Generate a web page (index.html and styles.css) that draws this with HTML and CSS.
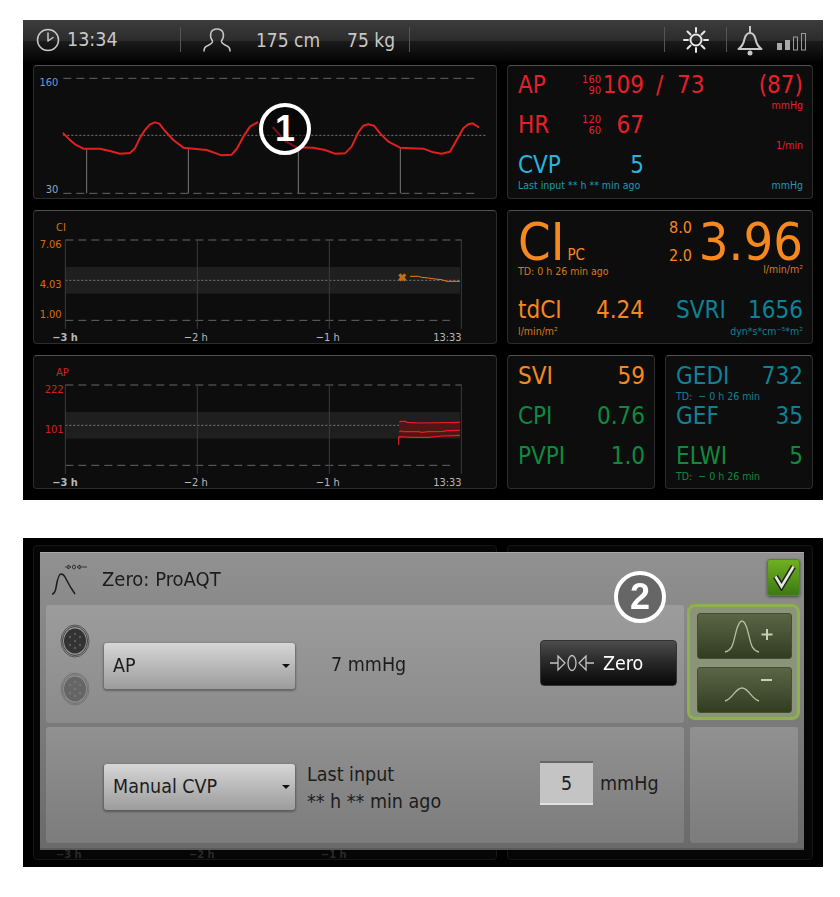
FILE: index.html
```html
<!DOCTYPE html>
<html lang="en">
<head>
<meta charset="utf-8">
<title>ProAQT monitor</title>
<link rel="stylesheet" href="styles.css">
</head>
<body>
<main class="page">

<section class="screen monitor">
  <header class="topbar">
    <div class="cell cell-time">
      <svg class="icon" width="24" height="24" viewBox="0 0 24 24"><circle cx="12" cy="12" r="10.5"/><path d="M12 13V5M12 13l5-3.5"/></svg>
      <span>13:34</span>
    </div>
    <div class="cell cell-patient">
      <svg class="icon" width="28" height="24" viewBox="0 0 28 24"><path d="M1 23c0-3 1-4.500 4-5.500 3-1.500 5-2.500 4.500-4.500C6 8 7 1 14 1s8 7 4.500 12c-.5 2 1.500 3 4.500 4.500 3 1 4 2.500 4 5.500"/></svg>
      <span class="height">175 cm</span>
      <span class="weight">75 kg</span>
    </div>
    <div class="spacer"></div>
    <div class="cell cell-sun">
      <svg class="icon icon-sun" width="26" height="26" viewBox="0 0 26 26"><circle cx="13" cy="13" r="5.500"/><path d="M13 1v4M13 21v4M1 13h4M21 13h4M4.500 4.500l3 3M18.500 18.500l3 3M4.500 21.500l3-3M18.500 7.500l3-3"/></svg>
    </div>
    <div class="cell cell-alarm">
      <svg class="icon icon-bell" width="26" height="30" viewBox="0 0 26 30"><path d="M13 0v7M1.500 23c3-2 5-5 6-10 1-4 3-6 5.500-6s4.500 2 5.500 6c1 5 3 8 6 10z"/><circle class="solid" cx="13" cy="27" r="2.500"/></svg>
      <svg class="bars" width="30" height="18" viewBox="0 0 30 18"><rect class="on" x="0" y="10" width="5" height="7"/><rect class="on" x="8" y="7" width="5" height="10"/><rect x="16.500" y="4" width="4" height="13"/><rect x="24.500" y=".5" width="4" height="16.500"/></svg>
    </div>
  </header>

  <div class="dash">
    <article class="panel">
      <svg class="chart" viewBox="42 153 1386 396">
        <path class="dash-line" d="M130 190H1375M130 535H1375"/>
        <path class="dot-line" d="M130 361H1400"/>
        <path class="tick" d="M200 403V535M505 400V535M835 398V535M1141 398V535"/>
        <polyline class="wave" points="130,355 150,375 165,388 190,401 240,401 270,408 300,416 330,414 345,400 360,368 375,345 390,328 405,322 418,326 435,348 460,375 490,398 560,405 605,421 635,419 650,402 670,365 690,335 712,322"/>
        <polyline class="wave" points="760,338 795,378 830,397 880,398 915,405 945,416 975,415 995,395 1015,352 1030,332 1045,328 1062,332 1080,355 1105,380 1140,398 1210,401 1240,412 1265,416 1290,410 1310,375 1330,340 1345,328 1358,325 1375,336"/>
        <text class="axis blue" x="115" y="212" text-anchor="end">160</text>
        <text class="axis blue-dim" x="115" y="533" text-anchor="end">30</text>
      </svg>
    </article>

    <article class="panel vitals">
      <div class="vrow">
        <span class="lbl red">AP</span>
        <span class="lim red">160<br>90</span>
        <span class="val red">109</span>
        <span class="extra red">/&nbsp;&nbsp;73</span>
        <span class="end red">(87)</span>
        <span class="sub"></span>
        <span class="unit red">mmHg</span>
      </div>
      <div class="vrow">
        <span class="lbl red">HR</span>
        <span class="lim red">120<br>60</span>
        <span class="val red">67</span>
        <span class="extra"></span>
        <span class="end"></span>
        <span class="sub"></span>
        <span class="unit red">1/min</span>
      </div>
      <div class="vrow">
        <span class="lbl blue-v">CVP</span>
        <span class="lim"></span>
        <span class="val blue-v">5</span>
        <span class="extra"></span>
        <span class="end"></span>
        <span class="sub blue-s">Last input ** h ** min ago</span>
        <span class="unit blue-s">mmHg</span>
      </div>
    </article>

    <article class="panel">
      <svg class="chart" viewBox="42 18 1386 396">
        <rect class="band" x="136" y="186" width="1184" height="80"/>
        <path class="dash-line" d="M136 105H1325M136 346H1290"/>
        <path class="dot-line" d="M136 226H1320"/>
        <path class="grid-line" d="M136 105V372M532 105V372M928 105V372M1324 105V372"/>
        <path class="marker" d="M1138 208l18 18M1156 208l-18 18"/>
        <polyline class="trend" points="1170,214 1195,214 1205,217 1225,219 1245,222 1265,224 1280,229 1320,229"/>
        <text class="axis orange" x="108" y="77">CI</text>
        <text class="axis orange" x="125" y="128" text-anchor="end">7.06</text>
        <text class="axis orange" x="125" y="248" text-anchor="end">4.03</text>
        <text class="axis orange" x="125" y="338" text-anchor="end">1.00</text>
        <text class="axis time strong" x="135" y="407" text-anchor="middle">−3 h</text>
        <text class="axis time" x="527" y="407" text-anchor="middle">−2 h</text>
        <text class="axis time" x="923" y="407" text-anchor="middle">−1 h</text>
        <text class="axis time" x="1325" y="407" text-anchor="end">13:33</text>
      </svg>
    </article>

    <article class="panel ci">
      <div class="ci-main">
        <div class="ci-name">
          <div class="ci-title"><span class="ci-big">CI</span><span class="ci-pc">PC</span></div>
          <div class="small ci-note">TD: 0 h 26 min ago</div>
        </div>
        <div class="ci-limits"><span>8.0</span><span>2.0</span></div>
        <div class="ci-value">
          <div class="ci-big">3.96</div>
          <div class="small ci-unit">l/min/m²</div>
        </div>
      </div>
      <div class="ci-lower">
        <div class="mini">
          <span class="lbl">tdCI</span><span class="num">4.24</span>
          <span class="small">l/min/m²</span>
        </div>
        <div class="mini teal">
          <span class="lbl">SVRI</span><span class="num">1656</span>
          <span class="small mini-right">dyn*s*cm⁻⁵*m²</span>
        </div>
      </div>
    </article>

    <article class="panel stack-panel">
      <svg class="chart" viewBox="42 18 1386 396">
        <rect class="band" x="136" y="186" width="1184" height="80"/>
        <path class="dash-line" d="M136 105H1325M136 346H1290"/>
        <path class="dot-line" d="M136 226H1320"/>
        <path class="grid-line" d="M136 105V372M532 105V372M928 105V372M1324 105V372"/>
        <rect class="range" x="1138" y="216" width="182" height="46"/>
        <polyline class="ap-line" points="1136,285 1136,262 1138,260 1175,262 1225,262 1265,258 1320,256"/>
        <polyline class="ap-line" points="1138,217 1142,214 1158,214 1160,217 1200,219 1320,217"/>
        <polyline class="ap-line" points="1138,246 1142,243 1150,245 1195,245 1205,247 1225,245 1270,244 1280,242 1320,241"/>
        <text class="axis red-a" x="108" y="77">AP</text>
        <text class="axis red-a" x="131" y="128" text-anchor="end">222</text>
        <text class="axis red-a" x="131" y="248" text-anchor="end">101</text>
        <text class="axis time strong" x="135" y="407" text-anchor="middle">−3 h</text>
        <text class="axis time" x="527" y="407" text-anchor="middle">−2 h</text>
        <text class="axis time" x="923" y="407" text-anchor="middle">−1 h</text>
        <text class="axis time" x="1325" y="407" text-anchor="end">13:33</text>
      </svg>
    </article>

    <div class="pair">
      <article class="panel tiles">
        <div class="tile orange-t"><span class="lbl">SVI</span><span class="num">59</span></div>
        <div class="tile green-t"><span class="lbl">CPI</span><span class="num">0.76</span></div>
        <div class="tile green-t"><span class="lbl">PVPI</span><span class="num">1.0</span></div>
      </article>
      <article class="panel tiles">
        <div class="tile teal"><span class="lbl">GEDI</span><span class="num">732</span><span class="small">TD:&nbsp;&nbsp;− 0 h 26 min</span></div>
        <div class="tile teal"><span class="lbl">GEF</span><span class="num">35</span></div>
        <div class="tile green-t"><span class="lbl">ELWI</span><span class="num">5</span><span class="small">TD:&nbsp;&nbsp;− 0 h 26 min</span></div>
      </article>
    </div>
  </div>

  <div class="badge badge-one">1</div>
</section>

<section class="screen zero">
  <div class="ghost ghost-left"><span>−3 h</span><span>−2 h</span><span>−1 h</span></div>
  <div class="ghost ghost-right"></div>

  <div class="dialog">
    <header class="dialog-head">
      <svg class="dlg-icon" width="36" height="32" viewBox="0 0 36 32"><path d="M0 30c2 0 3-1 4-6 1-6 2-14 5-14 2 0 3 1 4 3 2 4 5 10 10 17"/><path class="thin" d="M13 3h3M28 3h7M16 1l3 2-3 2zM28 1l-3 2 3 2z"/><ellipse class="thin" cx="22" cy="3" rx="1.500" ry="2"/></svg>
      <h1>Zero: ProAQT</h1>
      <button class="check" type="button" aria-label="Confirm">
        <svg width="26" height="26" viewBox="0 0 26 26"><path class="check-shadow" d="M4.500 11.500l6 10 12-20"/><path class="check-mark" d="M4.500 11.500l6 10 12-20"/></svg>
      </button>
    </header>
    <div class="dialog-body">
      <div class="row">
        <div class="ports">
          <svg class="port" width="30" height="34" viewBox="0 0 30 34"><ellipse class="ring" cx="15" cy="17" rx="14" ry="16"/><ellipse class="ring2" cx="15" cy="17" rx="12.500" ry="14.500"/><ellipse class="disc" cx="15" cy="17" rx="11" ry="12.500"/><g class="pins"><circle cx="15" cy="10" r="1.200"/><circle cx="10" cy="13" r="1.200"/><circle cx="20" cy="13" r="1.200"/><circle cx="15" cy="17" r="1.200"/><circle cx="10" cy="21" r="1.200"/><circle cx="20" cy="21" r="1.200"/><circle cx="15" cy="24" r="1.200"/></g></svg>
          <svg class="port port-off" width="30" height="34" viewBox="0 0 30 34"><ellipse class="ring" cx="15" cy="17" rx="14" ry="16"/><ellipse class="ring2" cx="15" cy="17" rx="12.500" ry="14.500"/><ellipse class="disc" cx="15" cy="17" rx="11" ry="12.500"/><g class="pins"><circle cx="15" cy="10" r="1.200"/><circle cx="10" cy="13" r="1.200"/><circle cx="20" cy="13" r="1.200"/><circle cx="15" cy="17" r="1.200"/><circle cx="10" cy="21" r="1.200"/><circle cx="20" cy="21" r="1.200"/><circle cx="15" cy="24" r="1.200"/></g></svg>
        </div>
        <div class="select">AP</div>
        <div class="info info-wide">7 mmHg</div>
        <div class="action">
          <button class="zero-btn" type="button">
            <svg width="44" height="22" viewBox="0 0 44 22"><path d="M0 11h8M36 11h8M8 4l7 7-7 7zM36 4l-7 7 7 7z"/><ellipse cx="22" cy="11" rx="4" ry="7.500"/></svg>
            <span>Zero</span>
          </button>
        </div>
      </div>
      <div class="scale">
        <button class="scale-btn" type="button" aria-label="Scale up">
          <svg width="94" height="45" viewBox="0 0 94 45"><path class="curve" d="M27 38c8-2 8-9 11-20 2-8 4-11 6-11s4 3 6 11c3 11 3 18 11 20"/><path class="sign" d="M69 15v11M63.500 20.500h11"/></svg>
        </button>
        <button class="scale-btn" type="button" aria-label="Scale down">
          <svg width="94" height="45" viewBox="0 0 94 45"><path class="curve" d="M27 33c8-2 10-13 17-13s9 11 17 13"/><path class="sign" d="M63 12h11"/></svg>
        </button>
      </div>
      <div class="row row-low">
        <div class="ports"></div>
        <div class="select">Manual CVP</div>
        <div class="info">Last input<br>** h ** min ago</div>
        <div class="action action-input">
          <div class="input">5</div>
          <span>mmHg</span>
        </div>
      </div>
      <div class="row-empty"></div>
    </div>
  </div>

  <div class="badge badge-two">2</div>
</section>

</main>
</body>
</html>
```

FILE: styles.css
```css
* { box-sizing: border-box; }

html, body { margin: 0; padding: 0; background: #fff; }

body { font-family: "DejaVu Sans Condensed", "DejaVu Sans", sans-serif; font-stretch: condensed; }

.page {
  display: flex;
  flex-direction: column;
  gap: 38px;
  width: 800px;
  margin: 20px 0 0 23px;
}

.screen {
  position: relative;
  width: 800px;
  background: #000;
  overflow: hidden;
}

.monitor { height: 480px; }
.zero { height: 329px; }

/* top bar */
.topbar {
  display: flex;
  align-items: flex-start;
  height: 45px;
  padding-top: 7px;
  color: #c8c8c8;
  font-size: 19.500px;
  background: linear-gradient(#3d3d3d 0, #2b2b2b 21px, #1b1b1b 21px, #0a0a0a 36px, #000 44px);
}

.cell {
  display: flex;
  align-items: center;
  height: 25px;
  border-right: 1px solid #555;
}

.cell-time { width: 158px; padding-left: 13px; gap: 7px; }
.cell-patient { width: 229px; padding-left: 22px; font-size: 19px; }
.height { margin-left: 25px; }
.weight { margin-left: 27px; }
.spacer { width: 254px; }
.cell-sun { width: 63px; padding-left: 18px; border-left: 1px solid #555; }
.cell-alarm { padding-left: 10px; border-right: 0; gap: 14px; }

.icon { flex: none; fill: none; stroke: #c8c8c8; stroke-width: 1.5; stroke-linecap: round; stroke-linejoin: round; }
.icon-sun { stroke: #e8e8e8; stroke-width: 2; }
.icon-bell { stroke-width: 2; }
.icon .solid { fill: #c8c8c8; stroke: none; }
.cell-alarm .icon { margin-top: 2px; }
.bars { flex: none; fill: none; stroke: #9a9a9a; margin-top: 5px; }
.bars .on { fill: #a8a8a8; stroke: none; }

/* dashboard grid */
.dash {
  display: grid;
  grid-template-columns: 464px 306px;
  grid-auto-rows: 134px;
  column-gap: 10px;
  row-gap: 11px;
  padding-left: 10px;
}

.panel {
  background: #0d0d0d;
  border: 1px solid #2c2c2c;
  border-top-color: #505050;
  border-radius: 4px;
  overflow: hidden;
}

.chart { display: block; width: 462px; height: 132px; }

.dash-line { fill: none; stroke: #666; stroke-width: 3; stroke-dasharray: 24 15; }
.dot-line { fill: none; stroke: #7a7a7a; stroke-width: 3; stroke-dasharray: 6 6; }
.tick { fill: none; stroke: #777; stroke-width: 3; }
.grid-line { fill: none; stroke: #3c3c3c; stroke-width: 3; }
.band { fill: #1f1f1f; }
.wave { fill: none; stroke: #e0201f; stroke-width: 6; stroke-linejoin: round; stroke-linecap: round; }
.trend { fill: none; stroke: #f07c12; stroke-width: 3; }
.marker { fill: none; stroke: #cc6a10; stroke-width: 9; }
.range { fill: #4f1616; }
.ap-line { fill: none; stroke: #e81c24; stroke-width: 3.500; }

.axis { font-size: 33px; }
.blue { fill: #6c9bd2; }
.blue-dim { fill: #8da8c0; }
.orange { fill: #d96d0a; }
.red-a { fill: #d81c24; }
.time { fill: #b8b8b8; }
.strong { font-weight: 700; }

/* vital rows */
.vitals { padding: 5px 9px 0 10px; }

.vrow {
  display: grid;
  grid-template-columns: 64px 19px 43px 1fr auto;
  grid-template-rows: 28px 12px;
  align-items: center;
  font-size: 24px;
  line-height: 28px;
}

.vrow .lbl, .vrow .val, .vrow .extra, .vrow .end { white-space: nowrap; }
.val { text-align: right; }
.extra { padding-left: 12px; }
.lim { font-size: 11px; line-height: 11px; text-align: right; white-space: nowrap; }
.sub { grid-column: 1 / 5; font-size: 10.500px; line-height: 12px; white-space: nowrap; }
.unit { grid-column: 5; font-size: 10.500px; line-height: 12px; text-align: right; white-space: nowrap; }

.red { color: #e6202a; }
.blue-v { color: #29b3dc; }
.blue-s { color: #1f97b8; }

/* CI panel */
.ci { padding: 0 9px 0 10px; color: #f5881f; }

.ci-main { display: flex; height: 85px; padding-top: 5px; }
.ci-name { width: 151px; }
.ci-title { display: flex; align-items: baseline; height: 52px; }
.ci-big { font-size: 52px; line-height: 52px; }
.ci-pc { font-size: 15px; margin-left: 3px; }
.small { display: block; font-size: 10.500px; line-height: 13px; white-space: nowrap; }
.ci-note { margin-top: -3px; }
.ci-unit { margin-top: -5px; }
.ci .small { color: #d67a1a; }
.ci-limits { display: flex; flex-direction: column; gap: 8px; padding-top: 2px; font-size: 16px; line-height: 20px; }
.ci-value { flex: 1; text-align: right; }

.ci-lower { display: grid; grid-template-columns: 126px 1fr; column-gap: 32px; }

.mini {
  display: grid;
  grid-template-columns: 1fr auto;
  font-size: 24px;
  line-height: 28px;
  white-space: nowrap;
}
.mini .small { grid-column: 1 / 3; line-height: 14px; }
.mini .mini-right { text-align: right; }
.ci .mini.teal { color: #0f8196; }
.ci .mini.teal .small { color: #0f8196; }

.pair { display: grid; grid-template-columns: 148px 148px; column-gap: 10px; }

.tiles { padding: 0 9px 0 10px; }

.tile {
  display: grid;
  grid-template-columns: 1fr auto;
  grid-template-rows: 28px 12px;
  height: 40px;
  font-size: 24px;
  line-height: 28px;
  white-space: nowrap;
}
.tile:first-child { margin-top: 6px; }
.tile .small { grid-column: 1 / 3; line-height: 12px; }
.orange-t { color: #f5881f; }
.green-t { color: #0d8a3f; }
.teal { color: #0f8196; }

/* annotations */
.badge {
  position: absolute;
  display: flex;
  align-items: center;
  justify-content: center;
  width: 52px;
  height: 52px;
  border: 4px solid #fff;
  border-radius: 50%;
  color: #fff;
  font-family: "Liberation Sans", sans-serif;
  font-stretch: normal;
  font-size: 36px;
  font-weight: 700;
  line-height: 1;
}
.badge-one { left: 236px; top: 83px; background: rgba(0, 0, 0, .45); }
.badge-two { left: 591px; top: 33px; background: #666; }

/* zero dialog */
.ghost {
  position: absolute;
  top: 7px;
  height: 315px;
  background: #060606;
  border: 1px solid #161616;
  border-radius: 4px;
}
.ghost-left { left: 10px; width: 464px; color: #2a2a2a; font-size: 11px; font-weight: 700; }
.ghost-left span { position: absolute; top: 302px; }
.ghost-left span:nth-child(1) { left: 22px; }
.ghost-left span:nth-child(2) { left: 155px; }
.ghost-left span:nth-child(3) { left: 287px; }
.ghost-right { left: 484px; width: 306px; }

.dialog {
  position: absolute;
  left: 17px;
  top: 14px;
  width: 764px;
  height: 298px;
  padding: 0 4px 6px 6px;
  background: linear-gradient(#919191, #6a6a6a);
  border-top: 1px solid #aaa;
  border-bottom: 2px solid #5a5a5a;
  color: #1c1c1c;
  filter: blur(.45px);
}

.dialog-head {
  display: flex;
  align-items: center;
  height: 52px;
  padding-left: 6px;
}

.dlg-icon { flex: none; margin-top: 2px; fill: none; stroke: #1c1c1c; stroke-width: 1.500; }
.dlg-icon .thin { stroke-width: .8; }
.dialog-head h1 { flex: 1; margin: 0 0 0 14px; font-size: 20px; font-weight: 400; }

.check {
  display: flex;
  align-items: center;
  justify-content: center;
  width: 33px;
  height: 37px;
  margin-top: -3px;
  padding: 0;
  border: 1px solid #5b7d38;
  border-radius: 3px;
  background: linear-gradient(#6fb021, #3c7a12);
  box-shadow: 0 1px 3px rgba(0, 0, 0, .5);
}
.check svg { fill: none; }
.check-shadow { stroke: #222; stroke-width: 5.500; }
.check-mark { stroke: #e4eadb; stroke-width: 2.500; }

.dialog-body {
  display: grid;
  grid-template-columns: 638px 113px;
  grid-template-rows: 118px 116px;
  column-gap: 3px;
  row-gap: 4px;
}

.row {
  display: flex;
  align-items: center;
  background: linear-gradient(#9c9c9c, #8b8b8b);
  border-radius: 3px;
}
.row-low { background: linear-gradient(#919191, #7c7c7c); }

.row-empty {
  margin: 0 2px 0 3px;
  background: linear-gradient(#919191, #7c7c7c);
  border-radius: 3px;
}

.ports {
  display: flex;
  flex: none;
  flex-direction: column;
  align-items: center;
  gap: 14px;
  width: 58px;
  margin-top: 2px;
}

.port .ring { fill: none; stroke: #555; stroke-width: 1; }
.port .ring2 { fill: none; stroke: #444; stroke-width: 1; }
.port .disc { fill: #333; }
.port .pins { fill: #5c5c5c; }
.port-off { opacity: .45; }

.select {
  display: flex;
  flex: none;
  align-items: center;
  justify-content: space-between;
  width: 191px;
  height: 46px;
  margin-top: 3px;
  padding: 0 5px 0 9px;
  border-radius: 3px;
  background: linear-gradient(#d6d6d6, #9c9c9c);
  box-shadow: 0 1px 2px 1px rgba(0, 0, 0, .3);
  font-size: 19.500px;
}
.select::after {
  content: "";
  border: 4px solid transparent;
  border-top: 4px solid #111;
  border-bottom: 0;
}

.info { flex: 1; margin-left: 12px; font-size: 19.500px; line-height: 27px; margin-top: 2px; }
.row-low .info { margin-top: 6px; }
.info-wide { margin-left: 36px; margin-top: 0; }

.action { flex: none; width: 137px; margin-right: 7px; }
.action-input { display: flex; align-items: center; gap: 7px; font-size: 19.500px; margin-top: -4px; }

.zero-btn {
  display: flex;
  align-items: center;
  gap: 9px;
  width: 137px;
  height: 46px;
  padding: 0 0 0 9px;
  border: 1px solid #333;
  border-radius: 4px;
  background: linear-gradient(#4c4c4c, #2a2a2a 45%, #080808);
  color: #fff;
  font: inherit;
  font-size: 19.500px;
  margin-top: -2px;
}
.zero-btn svg { flex: none; fill: none; stroke: #c4c4c4; stroke-width: 1.300; }

.input {
  display: flex;
  align-items: center;
  justify-content: center;
  width: 53px;
  height: 44px;
  background: #c4c4c4;
  border-top: 2px solid #666;
  border-bottom: 2px solid #e2e2e2;
  font-size: 19.500px;
}

.scale {
  display: flex;
  flex-direction: column;
  align-items: center;
  gap: 8px;
  height: 116px;
  margin-top: -1px;
  padding: 6px 0 0 2px;
  border: 3px solid #8fb050;
  border-radius: 8px;
  background: #8a9478;
}

.scale-btn {
  display: block;
  width: 95px;
  height: 46px;
  padding: 0;
  border: 1px solid #454f30;
  border-radius: 3px;
  background: linear-gradient(#5b6545, #323c21);
}
.scale-btn svg { display: block; fill: none; }
.curve { stroke: #b4bea0; stroke-width: 1.300; }
.sign { stroke: #c8cfb8; stroke-width: 2; }
```
